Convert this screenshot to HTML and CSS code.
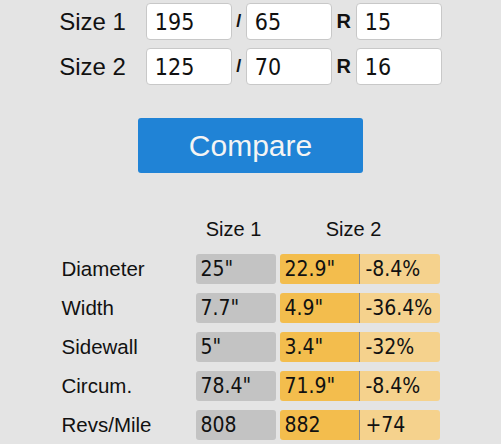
FILE: index.html
```html
<!DOCTYPE html>
<html lang="en">
<head>
  <meta charset="UTF-8" />
  <meta name="viewport" content="width=device-width, initial-scale=1.0"/>
  <title>Tire Size Compare</title>
  <link rel="stylesheet" href="styles.css">
</head>
<body>
  <div class="sizes">
    <div class="size-row">
      <label class="size-label">Size 1</label>
      <input class="num" type="text" value="195" />
      <span class="sep">/</span>
      <input class="num" type="text" value="65" />
      <span class="sep sep-r">R</span>
      <input class="num" type="text" value="15" />
    </div>
    <div class="size-row">
      <label class="size-label">Size 2</label>
      <input class="num" type="text" value="125" />
      <span class="sep">/</span>
      <input class="num" type="text" value="70" />
      <span class="sep sep-r">R</span>
      <input class="num" type="text" value="16" />
    </div>
  </div>

  <button class="compare">Compare</button>

  <div class="results">
    <div class="head">
      <span class="name"></span>
      <span class="head-1">Size 1</span>
      <span class="head-2">Size 2</span>
    </div>
    <div class="row">
      <span class="name">Diameter</span>
      <span class="cell a">25"</span>
      <span class="pair"><span class="cell b">22.9"</span><span class="cell diff">-8.4%</span></span>
    </div>
    <div class="row">
      <span class="name">Width</span>
      <span class="cell a">7.7"</span>
      <span class="pair"><span class="cell b">4.9"</span><span class="cell diff">-36.4%</span></span>
    </div>
    <div class="row">
      <span class="name">Sidewall</span>
      <span class="cell a">5"</span>
      <span class="pair"><span class="cell b">3.4"</span><span class="cell diff">-32%</span></span>
    </div>
    <div class="row">
      <span class="name">Circum.</span>
      <span class="cell a">78.4"</span>
      <span class="pair"><span class="cell b">71.9"</span><span class="cell diff">-8.4%</span></span>
    </div>
    <div class="row">
      <span class="name">Revs/Mile</span>
      <span class="cell a">808</span>
      <span class="pair"><span class="cell b">882</span><span class="cell diff">+74</span></span>
    </div>
  </div>
</body>
</html>
```

FILE: styles.css
```css
body {
  font-family: "Liberation Sans", Arial, sans-serif;
  background-color: #e4e4e4;
  color: #111;
  margin: 0;
  padding: 3px 0 0;
  display: flex;
  flex-direction: column;
  align-items: center;
}

.sizes {
  display: flex;
  flex-direction: column;
  gap: 8px;
}

.size-row {
  display: flex;
  align-items: center;
}

.size-label {
  font-size: 24px;
  margin-right: 20px;
}

.num {
  width: 86px;
  height: 37px;
  box-sizing: border-box;
  border: 1px solid #c8c8c8;
  border-radius: 4px;
  background: white;
  padding: 0 0 0 8px;
  font-family: "DejaVu Sans Condensed", "DejaVu Sans", sans-serif;
  font-stretch: condensed;
  font-size: 23px;
  color: #111;
  outline: none;
}

.sep {
  width: 14px;
  text-align: center;
  font-size: 18px;
  font-weight: bold;
}

.sep-r {
  width: 24px;
  font-size: 20px;
}

.compare {
  margin-top: 33px;
  width: 225px;
  height: 55px;
  background-color: #2083d6;
  color: #f4f4f4;
  border: none;
  border-radius: 3px;
  font-family: "Liberation Sans", Arial, sans-serif;
  font-size: 30px;
}

.results {
  margin-top: 45px;
  display: flex;
  flex-direction: column;
  gap: 9px;
}

.head, .row {
  display: flex;
  align-items: center;
}

.head {
  font-size: 20px;
  margin-bottom: 4px;
}

.name {
  width: 134px;
  font-size: 20.5px;
}

.head-1 {
  width: 76px;
  text-align: center;
}

.head-2 {
  width: 164px;
  text-align: center;
}

.cell {
  box-sizing: border-box;
  width: 80px;
  height: 30px;
  line-height: 30px;
  padding-left: 5px;
  border-radius: 3px;
  font-family: "DejaVu Sans Condensed", "DejaVu Sans", sans-serif;
  font-stretch: condensed;
  font-size: 21px;
}

.a {
  background-color: #c3c3c3;
  margin-right: 4px;
}

.pair {
  display: flex;
}

.b {
  background-color: #f3bd4d;
  border-radius: 3px 0 0 3px;
  border-right: 1px solid #8a8a8a;
}

.diff {
  background-color: #f5d28d;
  border-radius: 0 3px 3px 0;
  padding-left: 6px;
}
```
